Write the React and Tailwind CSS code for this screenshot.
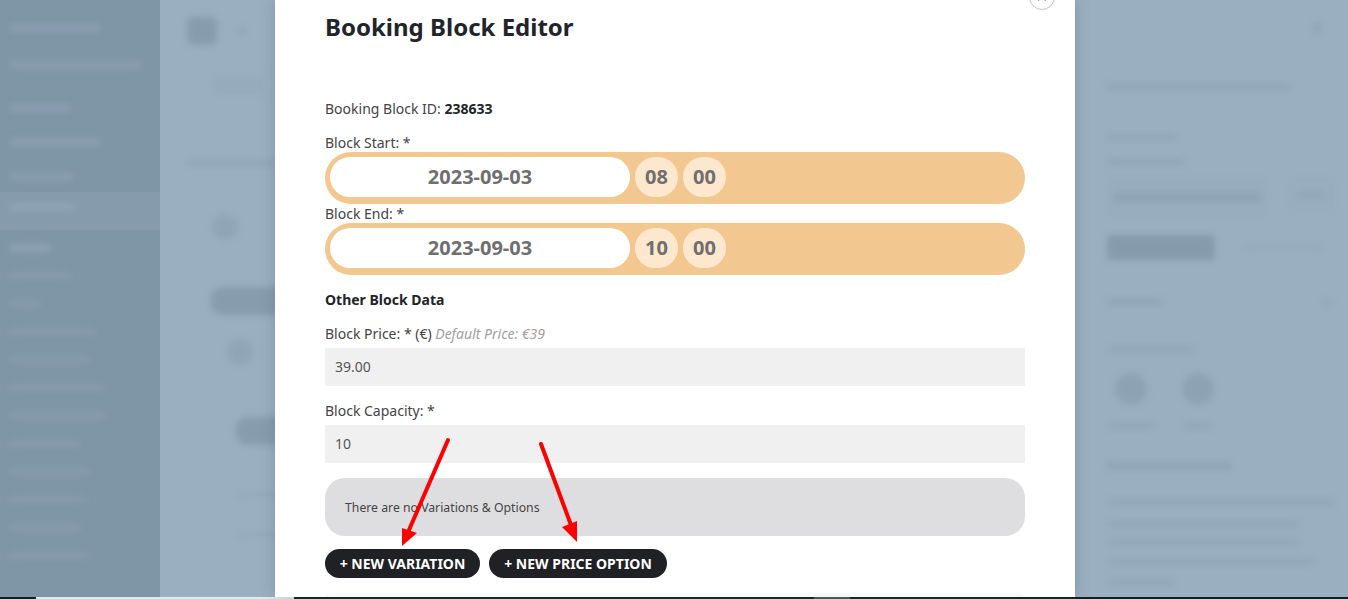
import { X } from "lucide-react";

const font = "font-['Noto_Sans',sans-serif]";

// blurred shapes of the page behind the modal
function Smudge({ className }) {
  return <div className={`shrink-0 blur-[3px] ${className}`} />;
}

function TimeRow({ date, hour, minute }) {
  return (
    <div className="flex h-[52px] gap-[5px] rounded-[26px] bg-[#f3c890] pt-[5px] pl-[5px]">
      <div className="flex h-[40px] w-[300px] items-center justify-center rounded-[20px] bg-white text-[20px] font-bold text-[#6f6f6f]">
        {date}
      </div>
      <div className="flex h-[40px] w-[43px] items-center justify-center rounded-full bg-[#fde8cf] text-[20px] font-bold text-[#6f6f6f]">
        {hour}
      </div>
      <div className="flex h-[40px] w-[43px] items-center justify-center rounded-full bg-[#fde8cf] text-[20px] font-bold text-[#6f6f6f]">
        {minute}
      </div>
    </div>
  );
}

function Sidebar() {
  return (
    <aside className="flex w-[160px] shrink-0 flex-col bg-[#7f96a7] pl-[10px]">
      <Smudge className="mt-[24px] h-[8px] w-[90px] bg-[#899fb0]" />
      <Smudge className="mt-[29px] h-[8px] w-[130px] bg-[#899fb0]" />
      <Smudge className="mt-[35px] h-[8px] w-[60px] bg-[#899fb0]" />
      <Smudge className="mt-[26px] h-[8px] w-[90px] bg-[#899fb0]" />
      <Smudge className="mt-[27px] h-[8px] w-[63px] bg-[#899fb0]" />
      <div className="-ml-[10px] mt-[11px] h-[38px] w-[160px] bg-[#869cad] pt-[11px] pl-[10px]">
        <Smudge className="h-[8px] w-[65px] bg-[#8fa5b5]" />
      </div>
      <Smudge className="mt-[14px] h-[8px] w-[40px] bg-[#8ea4b4]" />
      <Smudge className="mt-[20px] h-[7px] w-[60px] bg-[#869cad]" />
      <Smudge className="mt-[21px] h-[7px] w-[30px] bg-[#869cad]" />
      <Smudge className="mt-[21px] h-[7px] w-[85px] bg-[#869cad]" />
      <Smudge className="mt-[21px] h-[7px] w-[80px] bg-[#869cad]" />
      <Smudge className="mt-[21px] h-[7px] w-[95px] bg-[#869cad]" />
      <Smudge className="mt-[21px] h-[7px] w-[95px] bg-[#869cad]" />
      <Smudge className="mt-[21px] h-[7px] w-[70px] bg-[#869cad]" />
      <Smudge className="mt-[21px] h-[7px] w-[80px] bg-[#869cad]" />
      <Smudge className="mt-[21px] h-[7px] w-[75px] bg-[#869cad]" />
      <Smudge className="mt-[21px] h-[7px] w-[70px] bg-[#869cad]" />
      <Smudge className="mt-[21px] h-[7px] w-[80px] bg-[#869cad]" />
    </aside>
  );
}

function MainArea() {
  return (
    <main className="flex min-w-0 flex-1 flex-col overflow-hidden pl-[27px]">
      <div className="mt-[17px] flex items-center gap-[20px]">
        <Smudge className="h-[28px] w-[30px] rounded-md bg-[#879dae]" />
        <Smudge className="h-[10px] w-[10px] rounded-full bg-[#93a9ba]" />
      </div>
      <Smudge className="ml-[26px] mt-[30px] h-[20px] w-[50px] bg-[#96acbd]" />
      <Smudge className="mt-[65px] h-[6px] w-[95px] bg-[#91a7b8]" />
      <Smudge className="ml-[25px] mt-[48px] h-[26px] w-[26px] rounded-full bg-[#90a6b7]" />
      <Smudge className="ml-[23px] mt-[47px] h-[28px] w-[90px] rounded-full bg-[#879dae]" />
      <Smudge className="ml-[40px] mt-[24px] h-[26px] w-[26px] rounded-full bg-[#90a6b7]" />
      <Smudge className="ml-[48px] mt-[52px] h-[28px] w-[60px] rounded-full bg-[#879dae]" />
      <Smudge className="ml-[50px] mt-[47px] h-[5px] w-[50px] bg-[#94aabb]" />
      <Smudge className="ml-[50px] mt-[35px] h-[5px] w-[50px] bg-[#94aabb]" />
    </main>
  );
}

function RightPanel() {
  return (
    <aside className="flex w-[273px] shrink-0 flex-col pl-[32px]">
      <Smudge className="ml-[205px] mt-[23px] h-[10px] w-[10px] rounded-full bg-[#90a6b7]" />
      <Smudge className="mt-[51px] h-[6px] w-[183px] bg-[#90a6b7]" />
      <Smudge className="mt-[44px] h-[6px] w-[70px] bg-[#91a7b8]" />
      <Smudge className="mt-[19px] h-[6px] w-[78px] bg-[#91a7b8]" />

      <div className="mt-[12px] flex gap-[20px]">
        <div className="flex h-[40px] w-[160px] items-center justify-center bg-[#97adbe] blur-[3px]">
          <div className="h-[9px] w-[148px] bg-[#8fa5b6]" />
        </div>
        <div className="flex h-[36px] w-[48px] items-center justify-center bg-[#98aebf] blur-[3px]">
          <div className="h-[6px] w-[24px] bg-[#90a6b7]" />
        </div>
      </div>

      <div className="mt-[18px] flex items-center gap-[28px]">
        <Smudge className="h-[25px] w-[108px] rounded-sm bg-[#869cad]" />
        <Smudge className="h-[5px] w-[80px] bg-[#95abbc]" />
      </div>

      <div className="mt-[37px] flex w-[225px] items-center justify-between">
        <Smudge className="h-[6px] w-[56px] bg-[#90a6b7]" />
        <Smudge className="h-[10px] w-[10px] rounded-full bg-[#93a9ba]" />
      </div>

      <Smudge className="mt-[39px] h-[6px] w-[88px] bg-[#92a8b9]" />

      <div className="mt-[21px] flex gap-[23px]">
        <div className="flex w-[48px] flex-col items-center gap-[18px]">
          <Smudge className="h-[32px] w-[32px] rounded-full bg-[#8da3b4]" />
          <Smudge className="h-[6px] w-[48px] bg-[#92a8b9]" />
        </div>
        <div className="flex w-[40px] flex-col items-center gap-[18px]">
          <Smudge className="h-[32px] w-[32px] rounded-full bg-[#8da3b4]" />
          <Smudge className="h-[6px] w-[30px] bg-[#92a8b9]" />
        </div>
      </div>

      <Smudge className="mt-[33px] h-[8px] w-[124px] bg-[#8fa5b6]" />
      <Smudge className="mt-[29px] h-[6px] w-[228px] bg-[#92a8b9]" />
      <Smudge className="mt-[16px] h-[6px] w-[193px] bg-[#92a8b9]" />
      <Smudge className="mt-[12px] h-[6px] w-[193px] bg-[#92a8b9]" />
      <Smudge className="mt-[14px] h-[6px] w-[208px] bg-[#92a8b9]" />
      <Smudge className="mt-[14px] h-[6px] w-[68px] bg-[#92a8b9]" />
    </aside>
  );
}

function Modal() {
  return (
    <div className="absolute top-0 left-[275px] h-[597px] w-[800px] overflow-hidden bg-white px-[50px] text-[14px] text-[#444] shadow-[0_0_14px_rgba(70,90,110,0.3)]">
      <div className="absolute top-[-16px] right-[20px] flex h-[26px] w-[26px] items-center justify-center rounded-full border border-[#c4c4c4] text-[#aaa]">
        <X size={14} />
      </div>

      <h2 className="mt-[9px] text-[24px] leading-[36px] font-bold text-[#212529]">
        Booking Block Editor
      </h2>

      <p className="mt-[54px] leading-[20px]">
        Booking Block ID: <b className="font-bold text-[#212529]">238633</b>
      </p>

      <p className="mt-[14px] leading-[20px]">Block Start: *</p>
      <div className="-mt-[1px]">
        <TimeRow date="2023-09-03" hour="08" minute="00" />
      </div>
      <p className="leading-[20px]">Block End: *</p>
      <div className="-mt-[1px]">
        <TimeRow date="2023-09-03" hour="10" minute="00" />
      </div>

      <p className="mt-[15px] leading-[20px] font-bold text-[#212529]">Other Block Data</p>

      <p className="mt-[14px] leading-[20px]">
        Block Price: * (€){" "}
        <i className="text-[#a0a0a0]">Default Price: €39</i>
      </p>
      <div className="mt-[4px] flex h-[38px] items-center bg-[#f0f0f0] pb-[2px] pl-[10px] text-[#555]">39.00</div>

      <p className="mt-[15px] leading-[20px]">Block Capacity: *</p>
      <div className="mt-[4px] flex h-[38px] items-center bg-[#f0f0f0] pb-[2px] pl-[10px] text-[#555]">10</div>

      <div className="mt-[15px] flex h-[58px] items-center rounded-[20px] bg-[#dedee0] pt-[2px] pl-[20px] text-[12.25px]">
        There are no Variations &amp; Options
      </div>

      <div className="mt-[13px] flex gap-[9px]">
        <button className="h-[29px] w-[155px] rounded-full bg-[#202124] text-[14px] font-bold text-white">
          + NEW VARIATION
        </button>
        <button className="h-[29px] w-[178px] rounded-full bg-[#202124] text-[14px] font-bold text-white">
          + NEW PRICE OPTION
        </button>
      </div>

      <div className="mt-[15px] h-[20px] rounded-t-md bg-[#f8f8f8]" />
    </div>
  );
}

// the two red annotation arrows on top of the screenshot
function Arrows() {
  return (
    <svg className="absolute top-0 left-0" width="1348" height="599" fill="none">
      <path d="M448 440 L409 530" stroke="#ff0000" strokeWidth="4" strokeLinecap="round" />
      <path d="M402 546 L402 528 L417 533 Z" fill="#ff0000" />
      <path d="M541 444 L571 525" stroke="#ff0000" strokeWidth="4" strokeLinecap="round" />
      <path d="M577 542 L562 527 L577 521 Z" fill="#ff0000" />
    </svg>
  );
}

export default function App() {
  return (
    <div className={`relative flex h-[599px] w-[1348px] flex-col overflow-hidden ${font}`}>
      <div className="flex h-[597px] bg-[#9ab0c1]">
        <Sidebar />
        <MainArea />
        <RightPanel />
      </div>

      {/* taskbar sliver at the bottom edge */}
      <div className="flex h-[2px] bg-[#1c1c1c]">
        <div className="ml-[36px] w-[258px] bg-[#e8e8e8]" />
        <div className="ml-[520px] w-[36px] bg-[#555]" />
      </div>

      <Modal />
      <Arrows />
    </div>
  );
}
